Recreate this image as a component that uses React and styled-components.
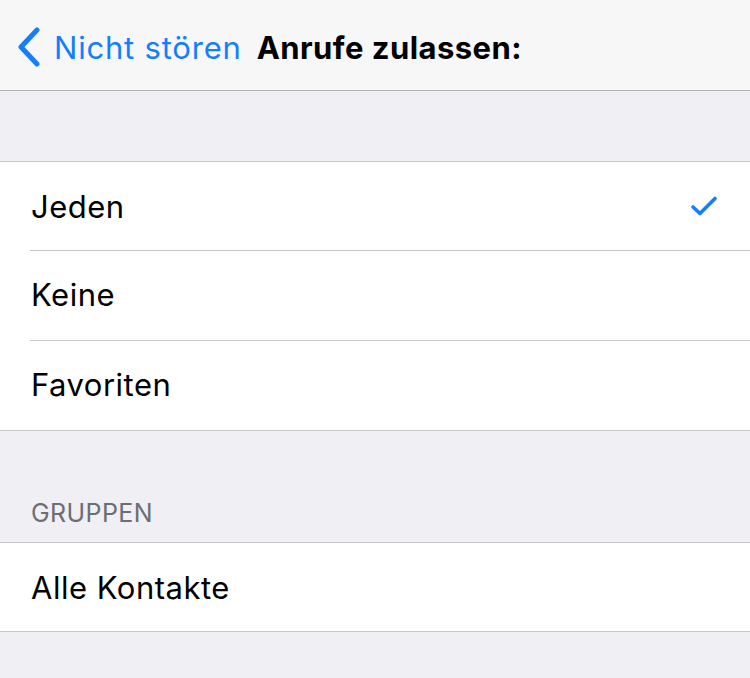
import React from "react";
import styled, { createGlobalStyle } from "styled-components";

const Global = createGlobalStyle`
  html, body { margin: 0; padding: 0; background: #efeff4; }
  body { font-family: Inter, "Noto Sans", sans-serif; -webkit-font-smoothing: antialiased; }
`;

const Page = styled.div`
  width: 750px;
  height: 678px;
  background: #efeff4;
  overflow: hidden;
`;

const NavBar = styled.header`
  height: 91px;
  box-sizing: border-box;
  background: #f7f7f8;
  border-bottom: 1px solid #b2b2b6;
  display: flex;
  align-items: center;
  padding: 4px 0 0 16px;
  gap: 15px;
`;

const Back = styled.div`
  display: flex;
  align-items: center;
  gap: 12px;
  color: #157efb;
  font-size: 31px;
  letter-spacing: 0.8px;
`;

const Title = styled.div`
  font-size: 31px;
  font-weight: 700;
  color: #000;
  letter-spacing: 0.45px;
`;

const Spacer = styled.div`
  height: ${(p) => p.$h}px;
  box-sizing: border-box;
  display: flex;
  align-items: flex-end;
  padding: 0 0 ${(p) => p.$pb || 0}px 31px;
`;

const SectionHeader = styled.span`
  font-size: 25px;
  color: #6d6d72;
  letter-spacing: 0.4px;
`;

const Group = styled.section`
  background: #fff;
  border-top: 1px solid #c8c7cc;
  border-bottom: 1px solid #c8c7cc;
`;

const Row = styled.div`
  height: ${(p) => (p.$first ? 88 : 90)}px;
  box-sizing: border-box;
  display: flex;
  align-items: center;
  justify-content: space-between;
  margin-left: 30px;
  padding: 0 32px ${(p) => (p.$first ? 0 : 2)}px 0;
  border-top: ${(p) => (p.$first ? "none" : "1px solid #c8c7cc")};
  font-size: 31px;
  color: #000;
  letter-spacing: 0.5px;
`;

const Label = styled.span`
  margin-left: 1px;
`;

const Chevron = () => (
  <svg width="26" height="40" viewBox="0 0 26 40">
    <path d="M21 3 L5 20 L21 37" fill="none" stroke="#157efb" strokeWidth="5" strokeLinecap="round" strokeLinejoin="round" />
  </svg>
);

const Check = () => (
  <svg width="28" height="22" viewBox="0 0 28 22">
    <path d="M3 12 L10 18.5 L25 3.5" fill="none" stroke="#157efb" strokeWidth="3.6" strokeLinecap="round" strokeLinejoin="round" />
  </svg>
);

export default function App() {
  return (
    <Page>
      <Global />
      <NavBar>
        <Back>
          <Chevron />
          <span>Nicht stören</span>
        </Back>
        <Title>Anrufe zulassen:</Title>
      </NavBar>
      <Spacer $h={70} />
      <Group>
        <Row $first>
          <Label>Jeden</Label>
          <Check />
        </Row>
        <Row>
          <Label>Keine</Label>
        </Row>
        <Row>
          <Label>Favoriten</Label>
        </Row>
      </Group>
      <Spacer $h={111} $pb={14}>
        <SectionHeader>GRUPPEN</SectionHeader>
      </Spacer>
      <Group>
        <Row $first>
          <Label>Alle Kontakte</Label>
        </Row>
      </Group>
    </Page>
  );
}
